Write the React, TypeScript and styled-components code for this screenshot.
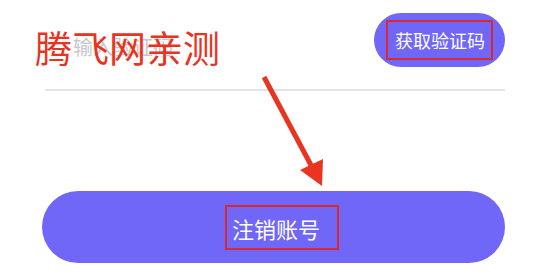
import styled, { createGlobalStyle } from "styled-components";

const GlobalStyle = createGlobalStyle`
  body {
    margin: 0;
    background: #fff;
    font-family: "Noto Sans CJK SC", "Noto Sans", sans-serif;
  }
`;

function App() {
  return (
    <Page>
      <GlobalStyle />
      <Form onSubmit={(e) => e.preventDefault()}>
        <CodeRow>
          <CodeInput placeholder="输入验证码" />
          <CodeButton type="button">
            <Highlight $pad="9px 6px 9px 7px">获取验证码</Highlight>
          </CodeButton>
        </CodeRow>
        <SubmitButton type="submit">
          <Highlight $pad="10px 17px 9px 5px" $shift={17}>
            注销账号
          </Highlight>
        </SubmitButton>
      </Form>
      <Stamp>腾飞网亲测</Stamp>
      <Arrow viewBox="0 0 550 275">
        <line
          x1="264"
          y1="77"
          x2="312"
          y2="167"
          stroke="#ea3422"
          strokeWidth="5"
        />
        <polygon points="300,170 323,159 322,186" fill="#ea3422" />
      </Arrow>
    </Page>
  );
}

export default App;

const Page = styled.div`
  position: relative;
  width: 550px;
  height: 275px;
  box-sizing: border-box;
  padding: 13px 45px 0 42px;
  overflow: hidden;
`;

const Form = styled.form`
  display: flex;
  flex-direction: column;
`;

const CodeRow = styled.div`
  display: flex;
  align-items: center;
  margin-left: 3px;
  padding-bottom: 22px;
  border-bottom: 2px solid #e3e3e3;
`;

const CodeInput = styled.input`
  flex: 1;
  min-width: 0;
  margin-top: 12px;
  padding: 0 0 0 28px;
  border: none;
  outline: none;
  background: transparent;
  font-family: inherit;
  font-size: 20px;
  color: #333;

  &::placeholder {
    color: #c8c8c8;
  }
`;

const CodeButton = styled.button`
  display: flex;
  align-items: center;
  justify-content: center;
  width: 131px;
  height: 54px;
  padding: 0;
  border: none;
  border-radius: 27px;
  background: #7066f8;
  color: #fff;
  font-family: inherit;
  font-size: 18px;
`;

const SubmitButton = styled.button`
  display: flex;
  align-items: center;
  justify-content: center;
  height: 72px;
  margin-top: 100px;
  padding: 0;
  border: none;
  border-radius: 36px;
  background: #7066f8;
  color: #fff;
  font-family: inherit;
  font-size: 22px;
`;

const Highlight = styled.span<{ $pad: string; $shift?: number }>`
  display: block;
  padding: ${(p) => p.$pad};
  margin-left: ${(p) => p.$shift ?? 0}px;
  border: 2px solid #d9282e;
  line-height: 1;
`;

const Stamp = styled.div`
  position: absolute;
  left: 35px;
  top: 29px;
  font-size: 37px;
  line-height: 1;
  color: #e8331f;
  pointer-events: none;
`;

const Arrow = styled.svg`
  position: absolute;
  left: 0;
  top: 0;
  width: 550px;
  height: 275px;
  pointer-events: none;
`;
